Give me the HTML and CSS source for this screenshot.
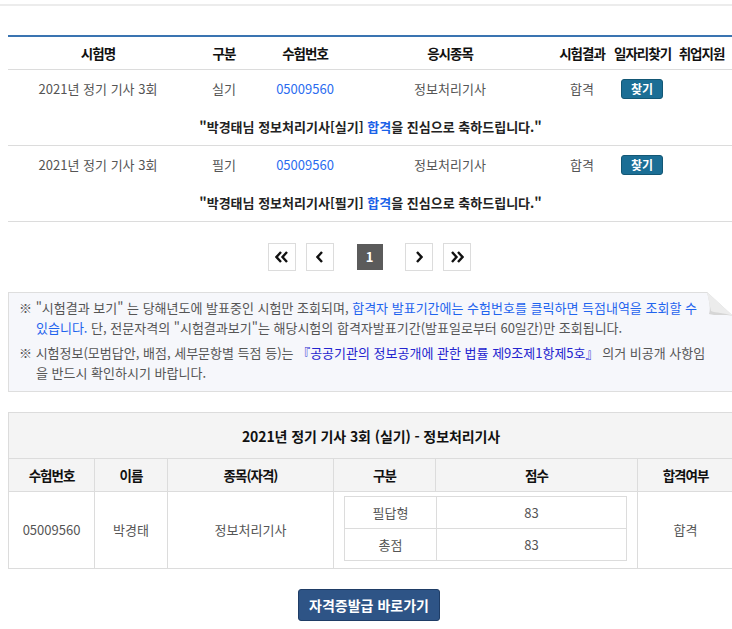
FILE: index.html
```html
<!DOCTYPE html>
<html lang="ko">
<head>
    <meta charset="UTF-8">
    <meta name="viewport" content="width=device-width, initial-scale=1.0">
    <title>시험결과 보기</title>
    <link rel="stylesheet" href="styles.css">
</head>
<body>
    <div class="top-line"></div>

    <div class="container">
        <table class="result-list">
            <colgroup>
                <col style="width:180px">
                <col style="width:72px">
                <col style="width:90px">
                <col style="width:200px">
                <col style="width:64px">
                <col style="width:56px">
                <col style="width:63px">
            </colgroup>
            <thead>
                <tr>
                    <th>시험명</th>
                    <th>구분</th>
                    <th>수험번호</th>
                    <th>응시종목</th>
                    <th>시험결과</th>
                    <th>일자리찾기</th>
                    <th>취업지원</th>
                </tr>
            </thead>
            <tbody>
                <tr class="data-row">
                    <td>2021년 정기 기사 3회</td>
                    <td>실기</td>
                    <td><a href="#" class="num-link">05009560</a></td>
                    <td>정보처리기사</td>
                    <td>합격</td>
                    <td><button class="find-btn">찾기</button></td>
                    <td></td>
                </tr>
                <tr class="msg-row">
                    <td colspan="7">"박경태님 정보처리기사[실기] <span class="pass">합격</span>을 진심으로 축하드립니다."</td>
                </tr>
                <tr class="data-row">
                    <td>2021년 정기 기사 3회</td>
                    <td>필기</td>
                    <td><a href="#" class="num-link">05009560</a></td>
                    <td>정보처리기사</td>
                    <td>합격</td>
                    <td><button class="find-btn">찾기</button></td>
                    <td></td>
                </tr>
                <tr class="msg-row">
                    <td colspan="7">"박경태님 정보처리기사[필기] <span class="pass">합격</span>을 진심으로 축하드립니다."</td>
                </tr>
            </tbody>
        </table>

        <div class="paging">
            <a href="#" class="page-btn first">
                <svg width="14" height="12" viewBox="0 0 14 12"><path d="M6 1 L1.5 6 L6 11 M12 1 L7.5 6 L12 11" fill="none" stroke="#111" stroke-width="2.4"/></svg>
            </a>
            <a href="#" class="page-btn prev">
                <svg width="8" height="12" viewBox="0 0 8 12"><path d="M6 1 L1.5 6 L6 11" fill="none" stroke="#111" stroke-width="2.4"/></svg>
            </a>
            <span class="page-current">1</span>
            <a href="#" class="page-btn next">
                <svg width="8" height="12" viewBox="0 0 8 12"><path d="M2 1 L6.5 6 L2 11" fill="none" stroke="#111" stroke-width="2.4"/></svg>
            </a>
            <a href="#" class="page-btn last">
                <svg width="14" height="12" viewBox="0 0 14 12"><path d="M2 1 L6.5 6 L2 11 M8 1 L12.5 6 L8 11" fill="none" stroke="#111" stroke-width="2.4"/></svg>
            </a>
        </div>

        <div class="notice">
            <p>※ "시험결과 보기" 는 당해년도에 발표중인 시험만 조회되며, <span class="blue">합격자 발표기간에는 수험번호를 클릭하면 득점내역을 조회할 수 있습니다.</span> 단, 전문자격의 "시험결과보기"는 해당시험의 합격자발표기간(발표일로부터 60일간)만 조회됩니다.</p>
            <p>※ 시험정보(모범답안, 배점, 세부문항별 득점 등)는 <span class="navy">『공공기관의 정보공개에 관한 법률 제9조제1항제5호』</span> 의거 비공개 사항임을 반드시 확인하시기 바랍니다.</p>
            <svg class="curl" width="26" height="24" viewBox="0 0 26 24">
                <path d="M0 0 H26 V24 Z" fill="#fff"/>
                <path d="M0 0 L26 24 C18 22 8 24 2 22 C4 16 2 8 0 0 Z" fill="#d6d6d6"/>
                <path d="M0 0 L26 24 C18 21 9 21 4 19 Z" fill="#ececec"/>
            </svg>
        </div>

        <table class="score-table">
            <colgroup>
                <col style="width:86px">
                <col style="width:73px">
                <col style="width:166px">
                <col style="width:102px">
                <col style="width:202px">
                <col style="width:96px">
            </colgroup>
            <tr class="title-row">
                <th colspan="6">2021년 정기 기사 3회 (실기) - 정보처리기사</th>
            </tr>
            <tr class="head-row">
                <th>수험번호</th>
                <th>이름</th>
                <th>종목(자격)</th>
                <th>구분</th>
                <th>점수</th>
                <th>합격여부</th>
            </tr>
            <tr class="body-row">
                <td>05009560</td>
                <td>박경태</td>
                <td>정보처리기사</td>
                <td colspan="2" class="inner-cell">
                    <table class="inner">
                        <tr>
                            <td class="inner-label">필답형</td>
                            <td>83</td>
                        </tr>
                        <tr>
                            <td class="inner-label">총점</td>
                            <td>83</td>
                        </tr>
                    </table>
                </td>
                <td>합격</td>
            </tr>
        </table>

        <div class="actions">
            <button class="issue-btn">자격증발급 바로가기</button>
        </div>
    </div>
</body>
</html>
```

FILE: styles.css
```css
body {
    margin: 0;
    font-family: "Noto Sans CJK KR", "Noto Sans", sans-serif;
    font-size: 13px;
    color: #555;
    background: #fff;
    overflow: hidden;
}

.top-line {
    height: 4px;
    border-bottom: 2px solid #ececec;
}

.container {
    width: 725px;
    margin-left: 8px;
    padding-top: 29px;
}

table {
    border-collapse: collapse;
    table-layout: fixed;
}

.result-list {
    width: 725px;
    border-top: 2px solid #3a74b1;
}

.result-list th,
.score-table th {
    padding: 0;
    font-size: 13.5px;
    font-weight: bold;
    letter-spacing: -1px;
    color: #111;
    line-height: 20px;
    white-space: nowrap;
}

.result-list th {
    height: 32px;
    border-bottom: 1px solid #dcdcdc;
}

.result-list td {
    padding: 0;
    text-align: center;
    line-height: 20px;
    white-space: nowrap;
}

.data-row td {
    height: 38px;
}

.msg-row td {
    height: 37px;
    font-weight: bold;
    color: #222;
    border-bottom: 1px solid #dcdcdc;
}

.num-link {
    color: #2b6cf0;
    text-decoration: none;
}

.pass {
    color: #1a62e8;
}

.find-btn {
    width: 42px;
    height: 20px;
    padding: 0;
    font-family: inherit;
    font-size: 12px;
    font-weight: bold;
    line-height: 18px;
    color: #fff;
    background-color: #1b6e95;
    border: 1px solid #135775;
    border-radius: 3px;
    cursor: pointer;
}

.paging {
    display: flex;
    justify-content: center;
    align-items: center;
    margin-top: 21px;
    padding-right: 3px;
}

.page-btn {
    display: flex;
    justify-content: center;
    align-items: center;
    width: 26px;
    height: 26px;
    border: 1px solid #dcdcdc;
    background: #fff;
}

.prev {
    margin-left: 10px;
}

.page-current {
    width: 26px;
    height: 26px;
    margin: 0 22px 0 23px;
    background: #5b5b5b;
    color: #fff;
    font-weight: bold;
    font-size: 13px;
    line-height: 26px;
    text-align: center;
}

.last {
    margin-left: 10px;
}

.notice {
    position: relative;
    margin-top: 21px;
    padding: 5px 20px 8px 10px;
    background: #f6f7fb;
    border: 1px solid #dedede;
    border-right: none;
    line-height: 20px;
}

.notice p {
    margin: 0;
    padding-left: 17px;
    text-indent: -17px;
}

.notice p + p {
    margin-top: 5px;
}

.notice .blue {
    color: #1f64ee;
    word-break: keep-all;
}

.notice .navy {
    color: #2424cf;
}

.curl {
    position: absolute;
    top: -1px;
    right: 0;
}

.score-table {
    width: 725px;
    margin-top: 20px;
    border: 1px solid #dcdcdc;
}

.score-table th {
    background: #f4f4f4;
    border: 1px solid #dcdcdc;
}

.score-table .title-row th {
    height: 45px;
    font-size: 14px;
    letter-spacing: -0.1px;
}

.head-row th {
    height: 32px;
}

.score-table td {
    padding: 0;
    text-align: center;
    border: 1px solid #dcdcdc;
    line-height: 20px;
}

.score-table .inner-cell {
    padding: 4px 10px 7px 10px;
}

.inner {
    width: 283px;
}

.inner td {
    height: 31px;
    border: 1px solid #dcdcdc;
}

.inner td.inner-label {
    width: 91px;
}

.actions {
    display: flex;
    justify-content: center;
    margin-top: 20px;
    padding-right: 3px;
}

.issue-btn {
    width: 142px;
    height: 32px;
    padding: 0;
    font-family: inherit;
    font-size: 14px;
    font-weight: bold;
    color: #fff;
    background-color: #2e5486;
    border: 1px solid #1f3d66;
    border-radius: 3px;
    cursor: pointer;
}
```
